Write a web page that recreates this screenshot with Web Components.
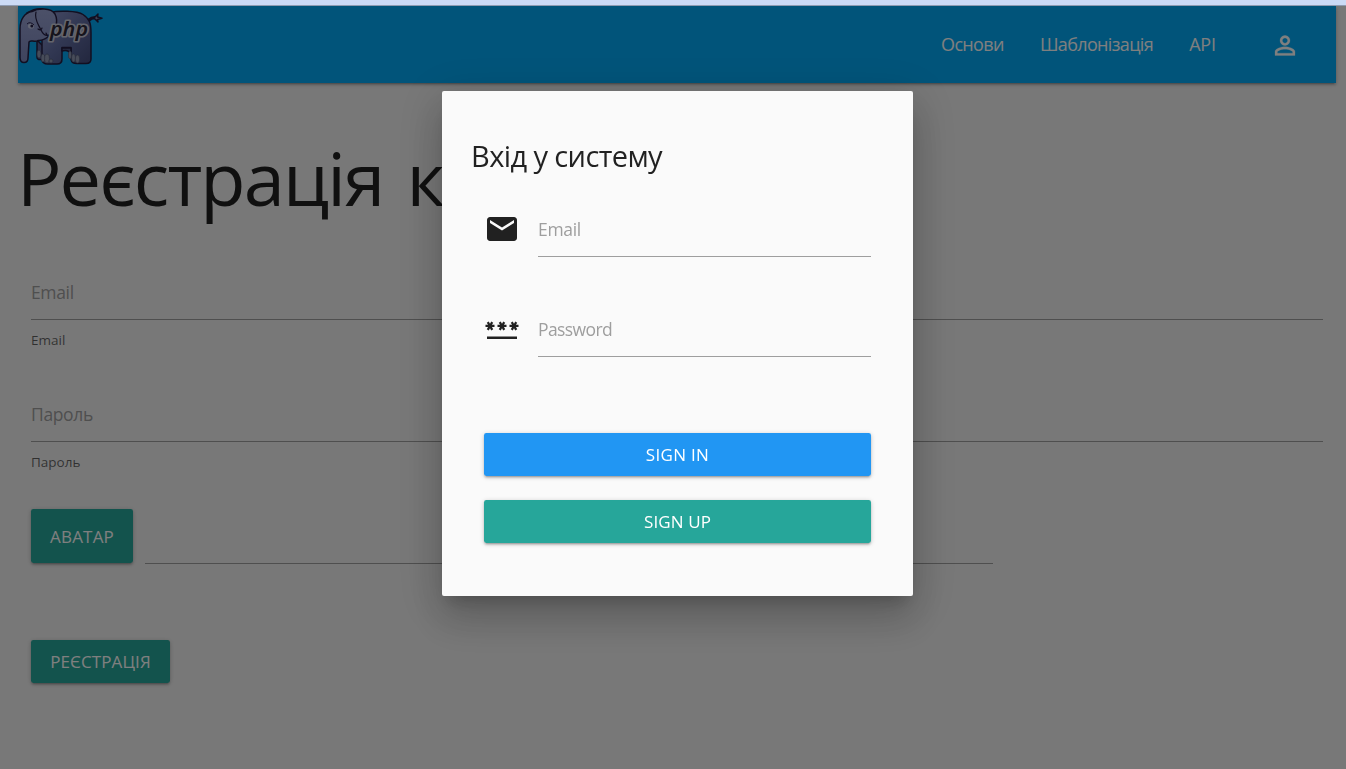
<!DOCTYPE html>
<html lang="uk">
<head>
<meta charset="utf-8">
<title>Реєстрація</title>
<style>
html,body{margin:0;height:100%;overflow:hidden}
body{background:#f1f1f1;color:rgba(0,0,0,.87);font-family:"Open Sans","Noto Sans",sans-serif;font-size:18px;line-height:27px}
</style>
</head>
<body>
<app-shell>
  <nav-bar slot="nav">
    <php-logo slot="logo"></php-logo>
    <nav-link style="letter-spacing:-.65px">Основи</nav-link>
    <nav-link style="letter-spacing:-.65px">Шаблонізація</nav-link>
    <nav-link style="letter-spacing:-.2px">API</nav-link>
    <person-icon></person-icon>
  </nav-bar>
  <page-title>Реєстрація к</page-title>
  <helper-field label="Email" helper="Email"></helper-field>
  <helper-field label="Пароль" helper="Пароль"></helper-field>
  <file-field>АВАТАР</file-field>
  <material-button class="submit" style="letter-spacing:.1px">РЕЄСТРАЦІЯ</material-button>
  <sign-modal slot="modal" heading="Вхід у систему">
    <icon-field label="Email" style="letter-spacing:-.3px">
      <svg slot="icon" width="36" height="36" viewBox="0 0 24 24" fill="#212121"><path d="M20 4H4c-1.1 0-1.99.9-1.99 2L2 18c0 1.1.9 2 2 2h16c1.1 0 2-.9 2-2V6c0-1.1-.9-2-2-2zm0 4l-8 5-8-5V6l8 5 8-5v2z"/></svg>
    </icon-field>
    <icon-field label="Password" style="letter-spacing:-.6px">
      <svg slot="icon" width="36" height="36" viewBox="0 0 24 24" fill="#212121"><path d="M2 17h20v1.700H2V17zm1.15-4.05L4 11.47l.85 1.48 1.3-.75-.85-1.48H7v-1.5H5.3l.85-1.47L4.85 7 4 8.47 3.15 7l-1.3.75.85 1.47H1v1.5h1.700l-.85 1.48 1.3.75zm6.7-.75l1.3.75.85-1.48.85 1.48 1.3-.75-.85-1.48H15v-1.5h-1.700l.85-1.47-1.3-.75L12 8.47 11.15 7l-1.3.75.85 1.47H9v1.5h1.700l-.85 1.48zM23 9.22h-1.700l.85-1.47-1.3-.75L20 8.47 19.15 7l-1.3.75.85 1.47H17v1.5h1.700l-.85 1.48 1.3.75.85-1.48.85 1.48 1.3-.75-.85-1.48H23v-1.5z"/></svg>
    </icon-field>
    <material-button slot="actions" wide style="--fill:#2196f3;letter-spacing:.3px">SIGN IN</material-button>
    <material-button slot="actions" wide style="letter-spacing:.1px">SIGN UP</material-button>
  </sign-modal>
</app-shell>
<script>
function define(name, html) {
  customElements.define(name, class extends HTMLElement {
    constructor() {
      super();
      this.attachShadow({ mode: 'open' }).innerHTML = html;
    }
    connectedCallback() {
      this.shadowRoot.querySelectorAll('[data-attr]').forEach(n => {
        n.textContent = this.getAttribute(n.dataset.attr) || '';
      });
    }
  });
}

define('app-shell', `
<style>
:host{display:block;height:100vh;box-sizing:border-box;overflow:hidden}
.top{height:5px;background:#cbdaf5;border-bottom:1px solid #8f9bb1;position:relative;z-index:3}
main{padding:0 10px 0 18px}
.overlay{position:fixed;inset:6px 0 0;background:rgba(0,0,0,.5);z-index:1}
.layer{position:fixed;inset:91px 0 auto 442px;z-index:2}
::slotted(material-button){margin-top:76px}
</style>
<div class="top"></div>
<main><slot name="nav"></slot><slot></slot></main>
<div class="overlay"></div>
<div class="layer"><slot name="modal"></slot></div>`);

define('nav-bar', `
<style>
:host{display:flex;justify-content:space-between;height:77px;background:#03a9f4;color:#fff;
box-shadow:0 2px 2px 0 rgba(0,0,0,.14),0 3px 1px -2px rgba(0,0,0,.12),0 1px 5px 0 rgba(0,0,0,.2)}
nav{display:flex;align-items:center;padding-right:36px}
</style>
<slot name="logo"></slot><nav><slot></slot></nav>`);

define('nav-link', `
<style>:host{display:block;margin-right:36.200px;line-height:77px;font-weight:370}</style><slot></slot>`);

define('person-icon', `
<style>:host{display:block;margin-left:18px;height:30px}svg{display:block}</style>
<svg width="30" height="30" viewBox="0 0 24 24" fill="#fff"><path transform="translate(0 .4)" d="M12 5.900c1.16 0 2.100.94 2.100 2.100s-.94 2.100-2.100 2.100S9.900 9.160 9.900 8s.94-2.100 2.100-2.100m0 9c2.970 0 6.100 1.460 6.100 2.100v1.100H5.900V17c0-.64 3.130-2.100 6.100-2.100M12 4C9.790 4 8 5.790 8 8s1.790 4 4 4 4-1.790 4-4-1.790-4-4-4zm0 9c-2.670 0-8 1.340-8 4v3h16v-3c0-2.660-5.330-4-8-4z" stroke="#fff" stroke-width=".2"/></svg>`);

define('php-logo', `
<style>:host{display:block;width:88px;height:62px}svg{display:block}text{font:italic 600 19px "Noto Sans",sans-serif}</style>
<svg width="88" height="62" viewBox="18 6 88 62">
<defs><linearGradient id="b" x1="0" y1="0" x2="1" y2="1"><stop offset="0" stop-color="#8f98cc"/><stop offset=".5" stop-color="#626ea4"/><stop offset="1" stop-color="#444d7c"/></linearGradient>
<linearGradient id="h" x1="0" y1="0" x2="0" y2="1"><stop offset="0" stop-color="#98a2d2"/><stop offset="1" stop-color="#7e88bc"/></linearGradient></defs>
<g stroke="#241e42" stroke-width="1.5" stroke-linejoin="round" stroke-linecap="round">
<path fill="none" stroke-width="3.2" d="M89 20C92 17 94 17.500 97 17.800"/>
<path fill="#8088ae" d="M94 18L98 14 97.500 17 102 18.300 97.500 19.500 98 22Z"/>
<path fill="#59639a" d="M37 40V57Q37 60 41 59.500L46 60 47 50Z"/>
<path fill="url(#b)" d="M50 12.500C58 10.500 77 10.500 83 14.500 90 19 91 24 91 33V59Q91 63.500 86 63.500H77Q71 63.500 71 59V47.500H62V59Q62 64 57 64H48Q42 64 42 59V34Z"/>
<path fill="#4b527e" d="M62 48H71V54Q68 49 62 51Z"/>
<path fill="#7b78b4" d="M27 13Q36 7.500 43 9L35 15Z"/>
<path fill="url(#h)" d="M32 11.500C38 8 51 7.500 55 14 58.500 21 56 31 49 36 46 38.500 43 41 38 40.500 35 43 30 39 29 42L28 58Q28 62.500 24 62.500 20 62.500 20 57.500V29C20 19 25 12.500 32 11.500Z"/>
<path fill="none" stroke-width="1.200" d="M36 12C34 19 38 24 40.500 29Q44 37 48.500 35M38 29Q41 31 42 28M46 33Q47 37 51 36"/>
</g>
<ellipse cx="31" cy="26" rx="3" ry="2.600" fill="#c9cfe8"/><circle cx="31.800" cy="26" r="1.500" fill="#26204a"/><path d="M27 24Q30 21 34 25" stroke="#26204a" fill="none"/>
<g fill="#8f98b2" stroke="#4a5272" stroke-width=".6"><ellipse cx="39" cy="54" rx="2" ry="4"/><ellipse cx="43" cy="58" rx="2" ry="4"/><ellipse cx="47" cy="58.500" rx="2.400" ry="4.500"/><ellipse cx="51" cy="61" rx="2" ry="2"/><ellipse cx="70" cy="55" rx="1.600" ry="4"/><ellipse cx="73.500" cy="58" rx="2" ry="4"/><ellipse cx="77.500" cy="59" rx="2.200" ry="4"/></g>
<text x="50" y="35.500" textLength="38" lengthAdjust="spacingAndGlyphs" fill="#2c2838" stroke="#c8cad8" stroke-width="3.200" paint-order="stroke" stroke-linejoin="round">php</text>
</svg>`);

define('page-title', `
<style>:host{display:block;height:82px;line-height:82px;margin:54px 0 50px -1px;font-size:74px;font-weight:370;letter-spacing:-1.9px;word-spacing:6px;white-space:nowrap}</style><slot></slot>`);

define('helper-field', `
<style>
:host{display:block;height:106px;margin:0 0 16px;padding:0 13px}
.input{height:50px;border-bottom:1px solid #9e9e9e;color:#9e9e9e;line-height:46px;font-size:17.5px;font-weight:370;letter-spacing:-.35px;margin-bottom:7px}
.helper{font-size:13.5px;line-height:27px;color:rgba(0,0,0,.6);font-weight:370}
</style>
<div class="input" data-attr="label"></div><div class="helper" data-attr="helper"></div>`);

define('file-field', `
<style>
:host{display:flex;align-items:flex-end;gap:12px;margin:-4px 343px 0 13px;height:55px;letter-spacing:.2px}
material-button{--height:54px;--line:55px;width:102px;margin-bottom:1px}
.path{flex:1;border-bottom:1px solid #9e9e9e}
</style>
<material-button><slot></slot></material-button><div class="path"></div>`);

define('material-button', `
<style>
:host{display:inline-block;box-sizing:border-box;padding:0 19px;height:var(--height,43px);line-height:var(--line,43px);
background:var(--fill,#26a69a);color:#fff;border-radius:2.4px;font-size:17px;font-weight:400;text-align:center;white-space:nowrap;
box-shadow:0 2px 2px 0 rgba(0,0,0,.14),0 3px 1px -2px rgba(0,0,0,.12),0 1px 5px 0 rgba(0,0,0,.2)}
:host([wide]){display:block;font-weight:450}
:host(.submit){margin-left:13px;width:139px}
</style><slot></slot>`);

define('sign-modal', `
<style>
:host{display:block;box-sizing:border-box;width:471px;height:505px;background:#fafafa;border-radius:2px;padding:45px 42px 0;
box-shadow:0 24px 38px 3px rgba(0,0,0,.14),0 9px 46px 8px rgba(0,0,0,.12),0 11px 15px -7px rgba(0,0,0,.2)}
h4{margin:0 0 30px -13px;font-size:29px;line-height:40px;font-weight:370;letter-spacing:-.6px}
.fields{height:227px}
.actions{display:grid;gap:24px}
</style>
<h4 data-attr="heading"></h4><div class="fields"><slot></slot></div><div class="actions"><slot name="actions"></slot></div>`);

define('icon-field', `
<style>
:host{display:flex;height:51px;margin-bottom:49px}
.icon{width:54px;padding-top:5px;box-sizing:border-box}
.input{flex:1;border-bottom:1px solid #9e9e9e;color:#9e9e9e;line-height:46px;font-size:17.5px;font-weight:370}
</style>
<div class="icon"><slot name="icon"></slot></div><div class="input" data-attr="label"></div>`);
</script>
</body>
</html>
